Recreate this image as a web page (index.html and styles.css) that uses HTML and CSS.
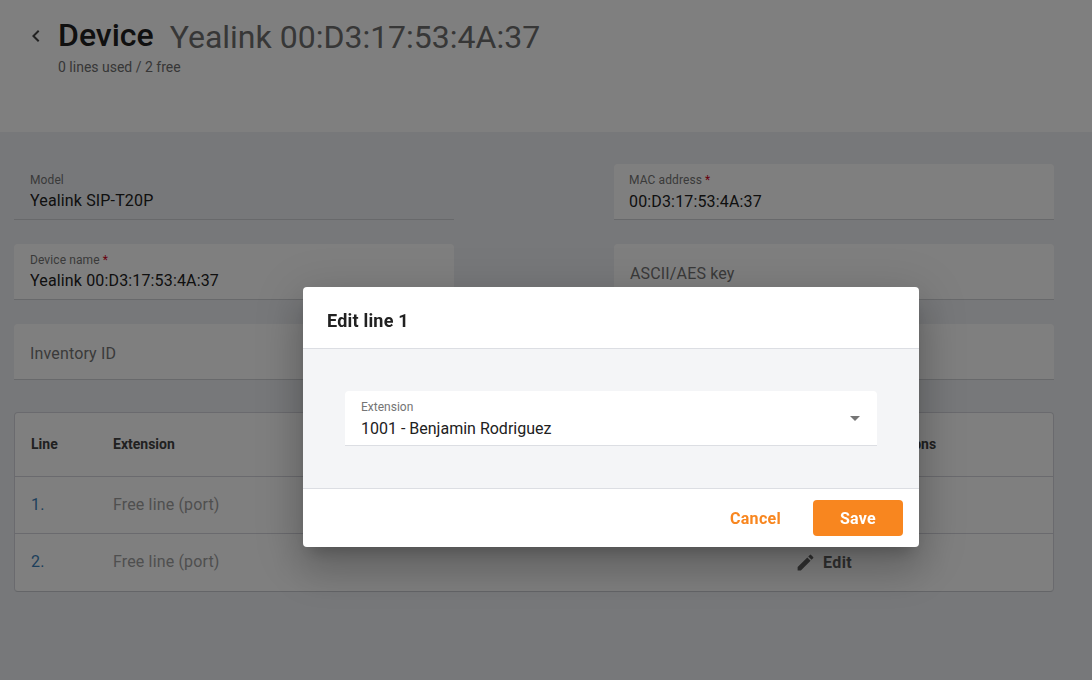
FILE: index.html
```html
<!DOCTYPE html>
<html lang="en">
<head>
    <meta charset="UTF-8">
    <meta name="viewport" content="width=device-width, initial-scale=1.0">
    <title>Device</title>
    <link rel="stylesheet" href="styles.css">
</head>
<body>
    <header class="page-header">
        <svg class="back-icon" width="24" height="24" viewBox="0 0 24 24"><path d="M15.41 7.41 14 6l-6 6 6 6 1.41-1.41L10.83 12z"/></svg>
        <div>
            <h1 class="title"><b>Device</b><span>Yealink 00:D3:17:53:4A:37</span></h1>
            <p class="subtitle">0 lines used / 2 free</p>
        </div>
    </header>

    <main class="content">
        <div class="form-grid">
            <div class="field field-plain">
                <label>Model</label>
                <div class="value">Yealink SIP-T20P</div>
            </div>
            <div class="field field-input">
                <label>MAC address <em>*</em></label>
                <div class="value">00:D3:17:53:4A:37</div>
            </div>
            <div class="field">
                <label>Device name <em>*</em></label>
                <div class="value">Yealink 00:D3:17:53:4A:37</div>
            </div>
            <div class="field field-empty"><span>ASCII/AES key</span></div>
            <div class="field field-empty"><span>Inventory ID</span></div>
            <div class="field field-empty"></div>
        </div>

        <div class="lines">
            <div class="line-row line-head">
                <div class="col-line">Line</div>
                <div class="col-ext">Extension</div>
                <div class="col-actions head-actions">Actions</div>
            </div>
            <div class="line-row">
                <div class="col-line link">1.</div>
                <div class="col-ext muted">Free line (port)</div>
            </div>
            <div class="line-row">
                <div class="col-line link">2.</div>
                <div class="col-ext muted">Free line (port)</div>
                <div class="col-actions edit">
                    <svg width="24" height="24" viewBox="0 0 24 24"><path d="M3 17.25V21h3.75L17.81 9.94l-3.75-3.75L3 17.25zM20.71 7.04a1 1 0 0 0 0-1.41l-2.34-2.34a1 1 0 0 0-1.41 0l-1.83 1.83 3.75 3.75 1.83-1.83z"/></svg>
                    Edit
                </div>
            </div>
        </div>
    </main>

    <div class="backdrop"></div>

    <div class="dialog">
        <h2 class="dialog-title">Edit line 1</h2>
        <div class="dialog-body">
            <div class="select">
                <label>Extension</label>
                <div class="value">1001 - Benjamin Rodriguez</div>
                <span class="arrow"></span>
            </div>
        </div>
        <div class="dialog-footer">
            <button class="btn-text">Cancel</button>
            <button class="btn-save">Save</button>
        </div>
    </div>
</body>
</html>
```

FILE: styles.css
```css
/* General body styling */
body {
    margin: 0;
    font-family: Roboto, sans-serif;
    background-color: #eff1f4;
    color: #212121;
    height: 680px;
    overflow: hidden;
}

/* Page header */
.page-header {
    display: flex;
    align-items: flex-start;
    height: 132px;
    box-sizing: border-box;
    padding: 16px 0 0 24px;
    background: #fff;
}

.back-icon {
    margin: 8px 10px 0 0;
    fill: #424242;
}

.title {
    display: flex;
    align-items: flex-start;
    margin: 0;
    font-size: 32px;
    line-height: 40px;
    font-weight: 400;
}

.title b {
    margin-top: -1px;
    font-weight: 500;
    color: #212121;
}

.title span {
    margin: 1px 0 -1px 16px;
    color: #6e6e6e;
}

.subtitle {
    margin: 2px 0 0;
    font-size: 14px;
    line-height: 18px;
    color: #6e6e6e;
}

/* Form fields */
.content {
    padding: 32px 38px 0 14px;
}

.form-grid {
    display: grid;
    grid-template-columns: 440px 440px;
    column-gap: 160px;
    row-gap: 24px;
}

.field {
    height: 56px;
    box-sizing: border-box;
    padding: 9px 16px 0;
    background: #fff;
    border-bottom: 1px solid #d0d2d7;
    border-radius: 4px 4px 0 0;
    letter-spacing: 0.15px;
}

.field-plain {
    background: transparent;
}

.field-input {
    padding-left: 15px;
}

.field-input .value {
    margin-top: 4px;
}

.field label,
.select label {
    display: block;
    font-size: 12px;
    line-height: 14px;
    color: #757575;
}

.field label {
    letter-spacing: 0.1px;
}

.field em {
    font-style: normal;
    color: #d0021b;
}

.value {
    margin-top: 3px;
    font-size: 16px;
    line-height: 22px;
    color: #212121;
}

.select .value {
    margin-top: 4px;
}

.field-empty span {
    display: block;
    margin-top: 11px;
    font-size: 16px;
    line-height: 20px;
    color: #757575;
}

/* Lines table */
.lines {
    margin-top: 32px;
    width: 1040px;
    box-sizing: border-box;
    padding-bottom: 1px;
    background: #fff;
    border: 1px solid #d4d5dc;
    border-bottom-color: #c8cad1;
    border-radius: 4px;
}

.line-row {
    display: flex;
    align-items: center;
    height: 57px;
    box-sizing: border-box;
    border-top: 1px solid #d4d5dc;
    font-size: 16px;
    letter-spacing: 0.15px;
}

.line-head {
    height: 63px;
    padding-bottom: 2px;
    border-top: 0;
    font-size: 14px;
    font-weight: 700;
    letter-spacing: 0;
    color: #424242;
}

.col-line {
    width: 98px;
    padding-left: 16px;
    box-sizing: border-box;
}

.col-ext {
    width: 682px;
}

.col-actions {
    display: flex;
    align-items: center;
}

.head-actions {
    padding-left: 93px;
}

.link,
.muted {
    padding-bottom: 2px;
}

.link {
    color: #3b7fb8;
}

.muted {
    color: #9e9e9e;
}

.edit {
    gap: 7px;
    font-weight: 700;
    letter-spacing: 0.4px;
    color: #616161;
}

.edit svg {
    width: 21px;
    height: 21px;
    fill: #616161;
}

/* Dialog on top of the page */
.backdrop {
    position: fixed;
    inset: 0;
    background: rgba(0, 0, 0, 0.5);
}

.dialog {
    position: absolute;
    left: 303px;
    top: 287px;
    width: 616px;
    height: 260px;
    display: flex;
    flex-direction: column;
    background: #fff;
    border-radius: 4px;
    overflow: hidden;
    box-shadow: 0 11px 15px -7px rgba(0, 0, 0, 0.2), 0 24px 38px 3px rgba(0, 0, 0, 0.14), 0 9px 46px 8px rgba(0, 0, 0, 0.12);
}

.dialog-title {
    margin: 0;
    height: 61px;
    box-sizing: border-box;
    padding: 23px 24px 0;
    font-size: 18px;
    line-height: 22px;
    font-weight: 700;
    letter-spacing: 0.2px;
    color: #212121;
}

.dialog-body {
    height: 141px;
    box-sizing: border-box;
    padding: 42px 42px 0;
    background: #f4f5f7;
    border-top: 1px solid #dcdee3;
    border-bottom: 1px solid #dcdee3;
}

.select {
    position: relative;
    height: 55px;
    box-sizing: border-box;
    padding: 9px 16px 0;
    background: #fff;
    border-bottom: 1px solid #dcdee3;
    border-radius: 4px 4px 0 0;
}

.arrow {
    position: absolute;
    right: 17px;
    top: 25px;
    border-left: 5px solid transparent;
    border-right: 5px solid transparent;
    border-top: 5px solid #757575;
}

.dialog-footer {
    display: flex;
    flex: 1;
    align-items: center;
    justify-content: flex-end;
    padding: 0 16px;
}

.dialog-footer button {
    height: 36px;
    border: 0;
    border-radius: 4px;
    font-family: Roboto, sans-serif;
    font-size: 16px;
    font-weight: 700;
    letter-spacing: 0.3px;
    cursor: pointer;
}

.btn-text {
    margin-right: 16px;
    padding: 0 16px;
    background: transparent;
    color: #f8861f;
}

.btn-save {
    width: 90px;
    background: #f8861f;
    color: #fff;
}
```
